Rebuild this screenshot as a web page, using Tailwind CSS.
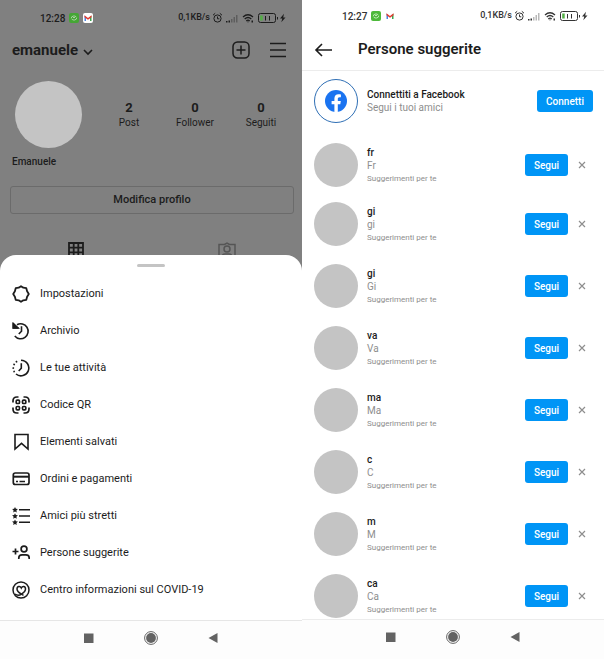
<!DOCTYPE html>
<html lang="it">

<head>
   <meta charset="UTF-8">
   <meta name="viewport" content="width=device-width, initial-scale=1.0">
   <title>Persone suggerite</title>
   <script src="https://cdn.jsdelivr.net/npm/@tailwindcss/browser@4"></script>
</head>

<body class="bg-white font-['Roboto',sans-serif] text-[#1c1c1c]">

   <!-- Shared icons -->
   <svg class="hidden">
      <symbol id="status-icons" viewBox="0 0 74 12">
         <g fill="none" stroke="currentColor">
            <circle cx="5.500" cy="6.500" r="3.600" />
            <path d="M5.500 4.500V6.800H7.300M1 3.200 3.200 1.300M10 3.200 7.800 1.300" />
            <path d="M31 5Q36 .5 41 5M32.700 7Q36 4 39.300 7M34.300 8.900Q36 7.500 37.700 8.900" stroke-width="1.300" />
            <rect x="46.500" y="1.500" width="17" height="9" rx="2" />
            <path d="M53.500 4V8.500M57.500 4V8.500" />
            <path d="M65.500 5V7.500" />
         </g>
         <path d="M14 9h1.500v1.500H14zM16.500 8.500H18v2h-1.500z" fill="currentColor" />
         <path d="M19 7h1.500v3.500H19zM21.500 5H23v5.500h-1.500zM24 3h1.500v7.500H24z" fill="currentColor" opacity=".35" />
         <path d="M35.200 9.500h1.600L36 10.700zM39.500 8.500H41v2h-1.500z" fill="currentColor" />
         <path d="M48.200 3.500h2.500v5h-2.500z" fill="#52b045" />
         <path d="M72 1.800 68 6.500h2.300L69.300 10.300 73.500 5.500h-2.300z" fill="currentColor" />
      </symbol>
      <symbol id="chat" viewBox="0 0 10 10">
         <rect width="10" height="10" rx="2" fill="#4db93b" />
         <path d="M2.300 5.200a2.700 2.200 0 0 1 5-1.200M7.700 4.800a2.700 2.200 0 0 1-5 1.200M4 4.500h2" fill="none" stroke="#d9f5d2" stroke-width=".8" />
      </symbol>
      <symbol id="gmail" viewBox="0 0 10 10">
         <path d="M1.500 2.500V8h1.500V4.500z" fill="#4b83e0" />
         <path d="M8.500 2.500V8H7V4.500z" fill="#3fa452" />
         <path d="M1.500 2.300 5 5l3.500-2.700V4.200L5 6.800 1.500 4.200z" fill="#e0392e" />
      </symbol>
      <symbol id="close" viewBox="0 0 8 8">
         <path d="M1 1 7 7M7 1 1 7" stroke="currentColor" stroke-width="1.200" />
      </symbol>
   </svg>

   <div class="grid min-h-screen grid-cols-2 pr-1.5">

      <!-- Profile with the open menu -->
      <section class="flex flex-col bg-[#808080]">
         <div class="flex h-9 items-center pl-10 pr-4 text-[10px] font-medium">
            <span>12:28</span>
            <svg class="ml-1 size-2.5 brightness-90"><use href="#chat" /></svg>
            <span class="ml-1 rounded-xs bg-white"><svg class="size-2.5"><use href="#gmail" /></svg></span>
            <span class="ml-auto text-[9px]">0,1KB/s</span>
            <svg class="ml-0.5 h-3 w-[74px]"><use href="#status-icons" /></svg>
         </div>
         <header class="flex h-7 items-center pl-3 pr-4">
            <button type="button" class="flex items-center gap-1">
               <h1 class="text-[15px] font-bold">emanuele</h1>
               <svg class="mt-1 h-2 w-3" viewBox="0 0 12 8" fill="none" stroke="currentColor" stroke-width="1.600"><path d="m2 2 4 4 4-4" /></svg>
            </button>
            <button type="button" aria-label="Crea" class="ml-auto">
               <svg class="size-[18px]" viewBox="0 0 18 18" fill="none" stroke="currentColor" stroke-width="1.500"><rect x="1" y="1" width="16" height="16" rx="4.500" /><path d="M9 4.500v9M4.500 9h9" /></svg>
            </button>
            <button type="button" aria-label="Menu" class="ml-5">
               <svg class="h-[18px] w-4" viewBox="0 0 16 18" stroke="currentColor" stroke-width="1.500"><path d="M0 2.500h16M0 9h16M0 15.500h16" /></svg>
            </button>
         </header>
         <div class="mt-[17px] flex items-center pl-[15px] pr-2">
            <div class="size-[67px] rounded-full bg-[#c4c4c4]"></div>
            <dl class="ml-3.5 grid flex-1 grid-cols-3 text-center">
               <div class="flex flex-col-reverse">
                  <dt class="text-[10px] leading-[14px]">Post</dt>
                  <dd class="text-[13px] leading-4 font-bold">2</dd>
               </div>
               <div class="flex flex-col-reverse">
                  <dt class="text-[10px] leading-[14px]">Follower</dt>
                  <dd class="text-[13px] leading-4 font-bold">0</dd>
               </div>
               <div class="flex flex-col-reverse">
                  <dt class="text-[10px] leading-[14px]">Seguiti</dt>
                  <dd class="text-[13px] leading-4 font-bold">0</dd>
               </div>
            </dl>
         </div>
         <p class="mt-[7px] pl-3 text-[10px] leading-[14px] font-medium">Emanuele</p>
         <button type="button" class="ml-2.5 mr-2 mt-[17px] h-7 rounded-[3px] border border-[#6b6b6b] text-[11px] font-medium">Modifica profilo</button>
         <div class="mt-7 grid grid-cols-2 justify-items-center">
            <svg class="size-4" viewBox="0 0 16 16" fill="none" stroke="currentColor" stroke-width="1.800"><path d="M1 1h14v14H1zM5.700 1v14M10.300 1v14M1 5.700h14M1 10.300h14" /></svg>
            <svg class="h-4 w-[18px] text-[#555]" viewBox="0 0 18 16" fill="none" stroke="currentColor" stroke-width="1.500"><path d="M1 16V2.500h5.500L9 1l2.500 1.500H17V16" /><circle cx="9" cy="7" r="3" /><path d="M4.500 14q0-2 2.500-2h4q2.500 0 2.500 2" /></svg>
         </div>

         <div class="relative -mt-[3px] flex flex-1 flex-col rounded-t-2xl bg-white">
            <div class="mx-auto mt-[9px] h-[3px] w-7 rounded-full bg-[#c4c4c4]"></div>
            <nav class="mt-2 flex flex-col pl-3 text-[11px]">
               <a href="#" class="flex h-[37px] items-center gap-2.5">
                  <svg class="size-[18px]" viewBox="0 0 18 18" fill="none" stroke="currentColor" stroke-width="1.800" stroke-linejoin="round"><path d="M9 1.200 11.300 2.700 14.300 3.200 15.100 6.300 16.800 9 15.100 11.700 14.300 14.800 11.300 15.300 9 16.800 6.700 15.300 3.700 14.800 2.900 11.700 1.200 9 2.900 6.300 3.700 3.200 6.700 2.700z" /></svg>
                  <span class="pt-0.5">Impostazioni</span>
               </a>
               <a href="#" class="flex h-[37px] items-center gap-2.5">
                  <svg class="size-[18px]" viewBox="0 0 18 18" fill="none" stroke="currentColor" stroke-width="1.600"><path d="M5 2.700A7.500 7.500 0 1 1 2.800 14" /><path d="M1.300 1v5H6.500M9.500 4.300v4.900L6.800 12" /><path d="M1.300 1.500V6H6z" fill="currentColor" /></svg>
                  <span class="pt-0.5">Archivio</span>
               </a>
               <a href="#" class="flex h-[37px] items-center gap-2.5">
                  <svg class="size-[18px]" viewBox="0 0 18 18" fill="none" stroke="currentColor" stroke-width="1.600"><path d="M9 1.200A7.800 7.800 0 1 1 4 15" /><path d="M2.500 13.200A7.800 7.800 0 0 1 7 1.500" stroke-dasharray="1.600 2" /><path d="M9.300 4.300v4.900L6.700 12" /></svg>
                  <span class="pt-0.5">Le tue attività</span>
               </a>
               <a href="#" class="flex h-[37px] items-center gap-2.5">
                  <svg class="size-[18px]" viewBox="0 0 18 18" fill="none" stroke="currentColor" stroke-width="1.700"><path d="M1 6.500V5Q1 1 5 1H6.500M11.500 1H13Q17 1 17 5V6.500M17 11.500V13Q17 17 13 17H11.500M6.500 17H5Q1 17 1 13V11.500" /><rect x="4.200" y="4.200" width="3.300" height="3.300" rx="1" /><rect x="10.500" y="4.200" width="3.300" height="3.300" rx="1" /><rect x="4.200" y="10.500" width="3.300" height="3.300" rx="1" /><rect x="10.500" y="10.500" width="3.300" height="3.300" rx="1" /></svg>
                  <span class="pt-0.5">Codice QR</span>
               </a>
               <a href="#" class="flex h-[37px] items-center gap-2.5">
                  <svg class="size-[18px]" viewBox="0 0 18 18" fill="none" stroke="currentColor" stroke-width="1.600"><path d="M3 1.500h13V16L9.500 10.300 3 16z" /></svg>
                  <span class="pt-0.5">Elementi salvati</span>
               </a>
               <a href="#" class="flex h-[37px] items-center gap-2.5">
                  <svg class="size-[18px]" viewBox="0 0 18 18" fill="none" stroke="currentColor" stroke-width="1.700"><rect x="1.300" y="3" width="15.700" height="11.500" rx="2" /><path d="M1.300 6.700h15.700" stroke-width="2" /><path d="M4 11.500h2M7.500 11.500h5.500" stroke-width="1.300" /></svg>
                  <span class="pt-0.5">Ordini e pagamenti</span>
               </a>
               <a href="#" class="flex h-[37px] items-center gap-2.5">
                  <svg class="size-[18px]" viewBox="0 0 18 18"><path d="M7 2.700h11M7 9h11M7 15.200h11" stroke="currentColor" stroke-width="1.400" /><path id="star" d="m3 0 .9 1.800 2 .3-1.500 1.400.4 2L3 4.500l-1.800 1 .4-2L.1 2.100l2-.3z" fill="currentColor" /><use href="#star" y="6.200" /><use href="#star" y="12.400" /></svg>
                  <span class="pt-0.5">Amici più stretti</span>
               </a>
               <a href="#" class="flex h-[37px] items-center gap-2.5">
                  <svg class="size-[18px]" viewBox="0 0 18 18" fill="none" stroke="currentColor" stroke-width="1.700"><path d="M.5 7.500h6M3.500 4.500v6" /><circle cx="12" cy="5" r="2.900" /><path d="M6.800 15v-1q0-3.200 3.200-3.200h4q3.200 0 3.200 3.200v1" /></svg>
                  <span class="pt-0.5">Persone suggerite</span>
               </a>
               <a href="#" class="flex h-[37px] items-center gap-2.5">
                  <svg class="size-[18px]" viewBox="0 0 18 18" fill="none" stroke="currentColor" stroke-width="1.500"><circle cx="9" cy="9" r="8" /><path d="M3 13Q6 15.500 9.500 13.200 13.500 10.500 13.500 8C13.500 4.800 10.300 4.800 9.300 7 8.300 4.800 5 4.800 5 8Q5 10.500 9.500 13.200L11.500 14.300" /></svg>
                  <span class="pt-0.5">Centro informazioni sul COVID-19</span>
               </a>
            </nav>
            <div class="mt-3 flex flex-1 items-start border-t border-[#e6e6e6] bg-[#fdfdfd] px-[82px] pt-2.5">
               <div class="flex flex-1 items-center justify-between text-[#636363]">
                  <svg class="size-3.5" viewBox="0 0 14 14"><path d="M2 2.500h9.500V12H2z" fill="currentColor" /></svg>
                  <svg class="size-3.5" viewBox="0 0 14 14"><circle cx="7" cy="7" r="6.400" fill="none" stroke="currentColor" /><circle cx="7" cy="7" r="4.900" fill="currentColor" /></svg>
                  <svg class="size-3.5" viewBox="0 0 14 14"><path d="M11.500 2v10L2.500 7z" fill="currentColor" /></svg>
               </div>
            </div>
         </div>
      </section>

      <!-- Suggested people -->
      <section class="flex flex-col bg-white">
         <div class="flex h-8 items-center pl-10 pr-4 text-[10px] font-medium text-[#333]">
            <span>12:27</span>
            <svg class="ml-1 size-2.5"><use href="#chat" /></svg>
            <svg class="ml-1 size-2.5"><use href="#gmail" /></svg>
            <span class="ml-auto text-[9px]">0,1KB/s</span>
            <svg class="ml-0.5 h-3 w-[74px]"><use href="#status-icons" /></svg>
         </div>
         <header class="flex h-[39px] items-center border-b border-[#ececec] pb-[3px] pl-3">
            <button type="button" aria-label="Indietro">
               <svg class="h-4 w-[18px]" viewBox="0 0 18 16" fill="none" stroke="currentColor" stroke-width="1.600"><path d="M18 8H2M8 2 2 8l6 6" /></svg>
            </button>
            <h2 class="ml-[26px] text-[15px] font-semibold">Persone suggerite</h2>
         </header>
         <div class="flex h-[60px] items-center pl-3 pr-[11px]">
            <div class="flex size-11 items-center justify-center rounded-full border border-[#2f6fb5]">
               <svg class="size-[22px]" viewBox="0 0 22 22"><circle cx="11" cy="11" r="11" fill="#1a73f0" /><path d="M9.400 21.900v-7.700H6.600V11h2.800V8.600c0-2.800 1.600-4.300 4.100-4.300 1.200 0 2.400.2 2.400.2v2.700h-1.300c-1.400 0-1.800.8-1.800 1.700V11h3l-.5 3.200h-2.500v7.700z" fill="#fff" /></svg>
            </div>
            <div class="ml-[9px] flex-1 text-[10px] leading-[13px]">
               <p class="font-medium">Connettiti a Facebook</p>
               <p class="text-[#8e8e8e]">Segui i tuoi amici</p>
            </div>
            <button type="button" class="h-[22px] w-14 rounded-[3px] bg-[#0095f6] text-[10px] font-medium text-white">Connetti</button>
         </div>
         <ul id="suggestions" class="mt-1.5 flex flex-col pl-3 pr-[18px]"></ul>
         <div class="relative -mt-2 flex flex-1 items-start border-t border-[#ececec] bg-[#fdfdfd] px-[82px] pt-2.5">
            <div class="flex flex-1 items-center justify-between text-[#636363]">
               <svg class="size-3.5" viewBox="0 0 14 14"><path d="M2 2.500h9.500V12H2z" fill="currentColor" /></svg>
               <svg class="size-3.5" viewBox="0 0 14 14"><circle cx="7" cy="7" r="6.400" fill="none" stroke="currentColor" /><circle cx="7" cy="7" r="4.900" fill="currentColor" /></svg>
               <svg class="size-3.5" viewBox="0 0 14 14"><path d="M11.500 2v10L2.500 7z" fill="currentColor" /></svg>
            </div>
         </div>
      </section>
   </div>

   <script>
      const people = [
         { username: "fr", name: "Fr" },
         { username: "gi", name: "gi" },
         { username: "gi", name: "Gi" },
         { username: "va", name: "Va" },
         { username: "ma", name: "Ma" },
         { username: "c", name: "C" },
         { username: "m", name: "M" },
         { username: "ca", name: "Ca" },
      ];

      let html = "";
      for (const person of people) {
         html += `
            <li class="flex h-[62px] items-center first:h-14">
               <div class="size-11 rounded-full bg-[#c4c4c4]"></div>
               <div class="ml-[9px] flex-1 text-[10px] leading-[13px]">
                  <p class="font-medium">${person.username}</p>
                  <p class="text-[#8e8e8e]">${person.name}</p>
                  <p class="text-[8px] text-[#8e8e8e]">Suggerimenti per te</p>
               </div>
               <button type="button" class="h-[22px] w-[43px] rounded-[3px] bg-[#0095f6] text-[10px] font-medium text-white">Segui</button>
               <button type="button" aria-label="Rimuovi ${person.username}" class="ml-2.5 text-[#8e8e8e]">
                  <svg class="size-2"><use href="#close" /></svg>
               </button>
            </li>
         `;
      }
      document.getElementById("suggestions").innerHTML = html;
   </script>

</body>

</html>
